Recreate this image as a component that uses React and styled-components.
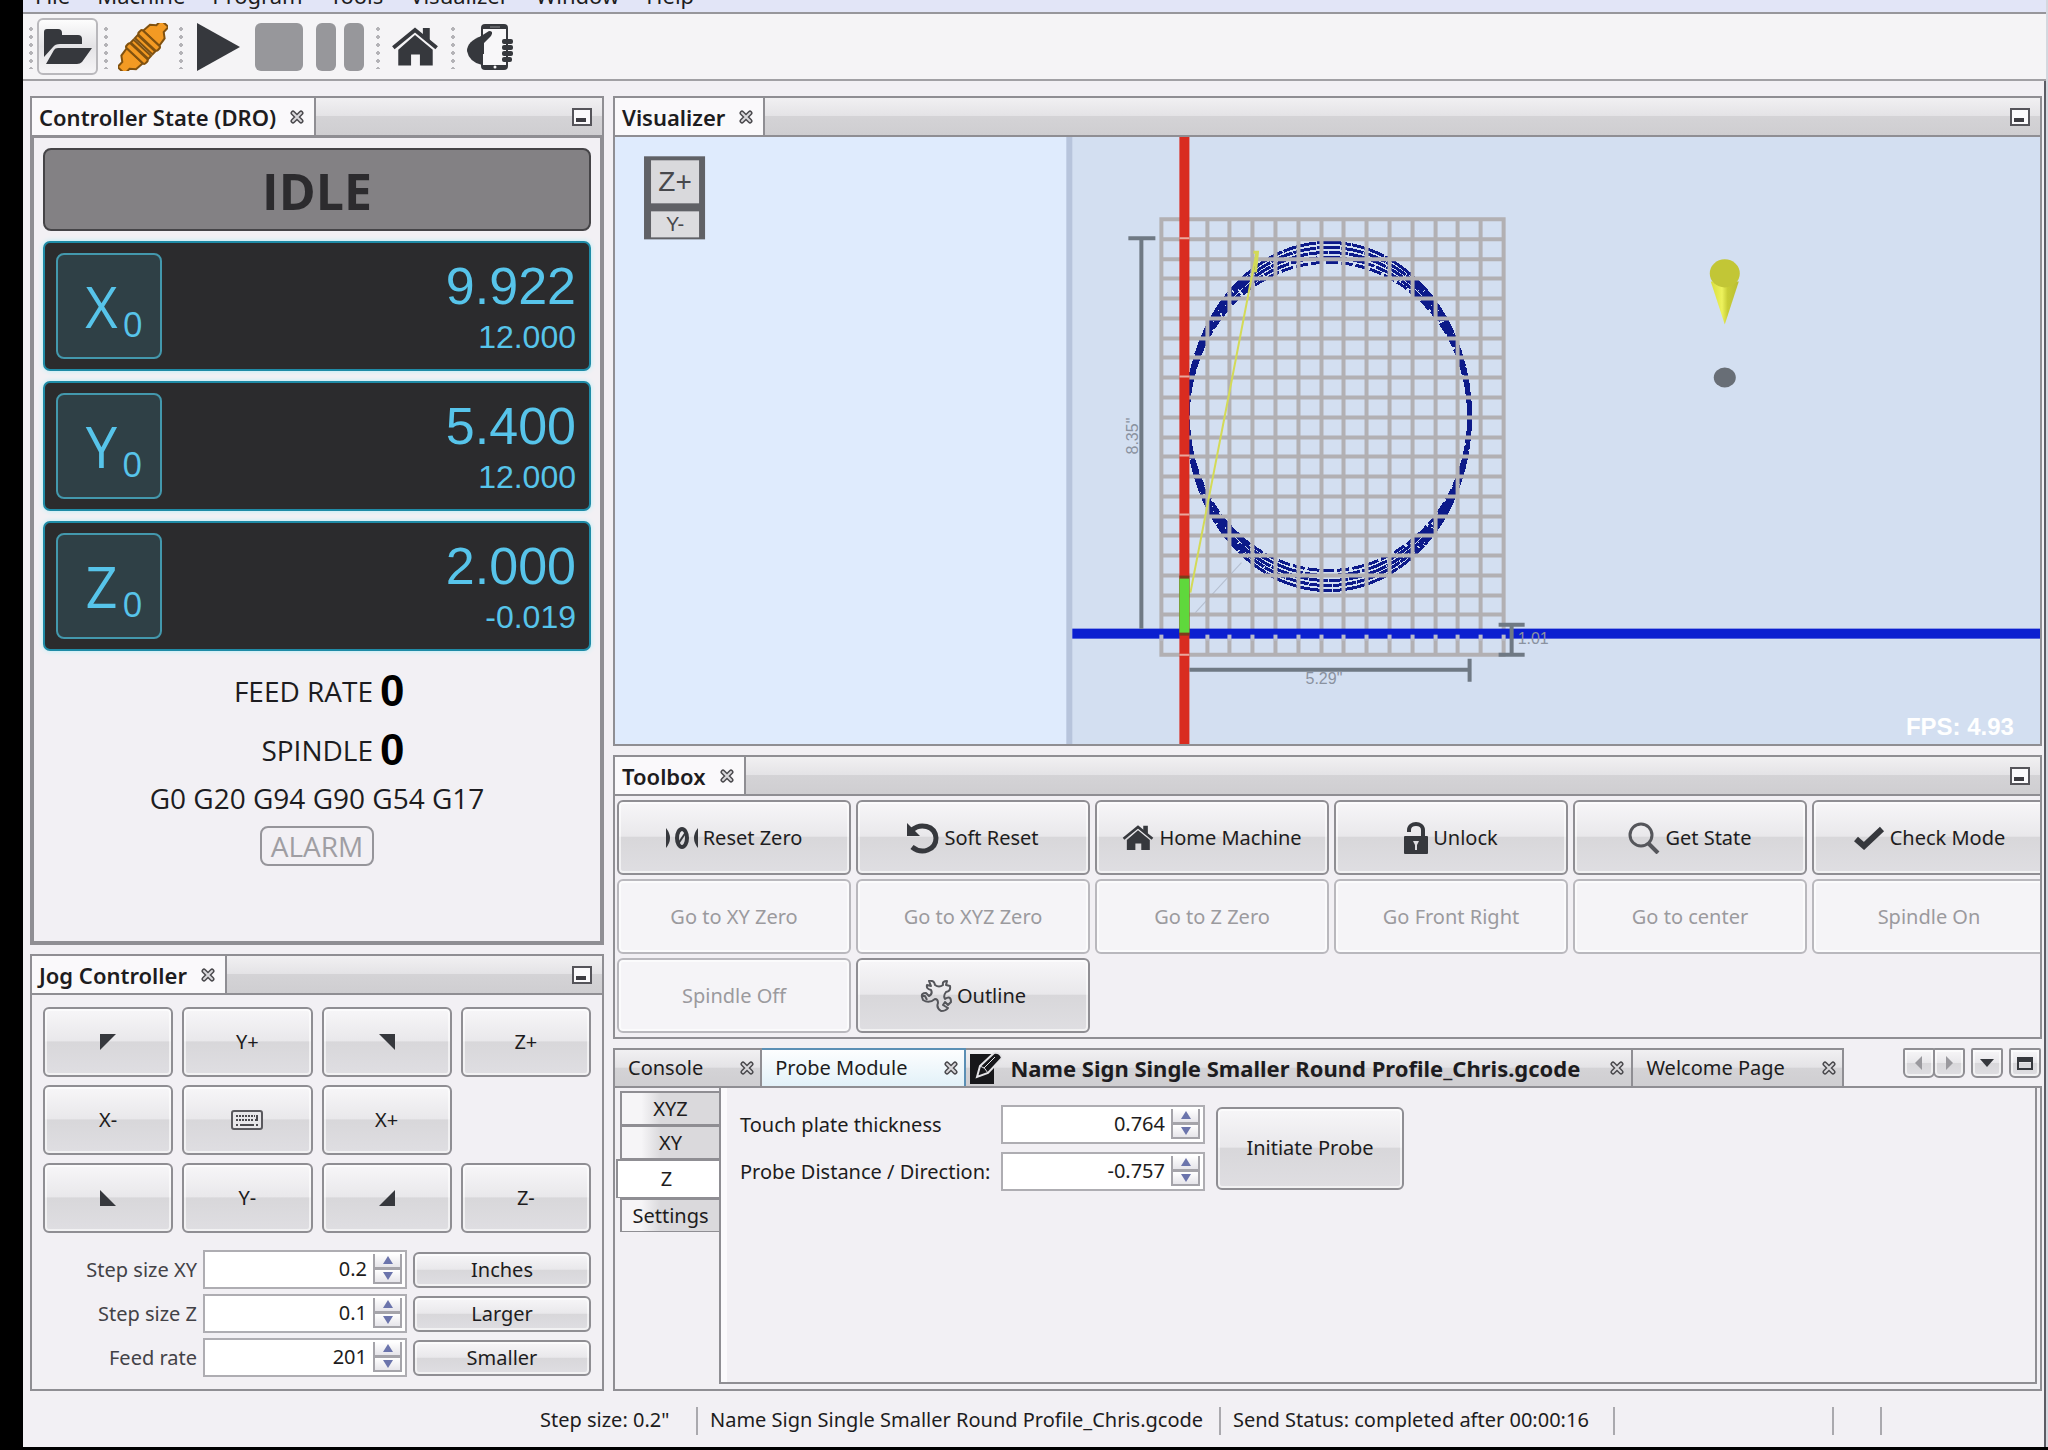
import React, { useState } from 'react'
import styled, { createGlobalStyle, css } from 'styled-components'

const COLORS = {
  WINDOW: '#f2f0f4',
  LINE: '#8f8e93',
  LINE_SOFT: '#b9b8bd',
  TEXT: '#1d1c20',
  TEXT_DISABLED: '#9b9a9e',
  ICON: '#36383d',
  DRO_BG: '#2b2b2d',
  DRO_TEXT: '#57c4ea',
  DRO_LINE: '#1f8ba6',
  NAVY: '#0c1a8a'
}

const FONT_UI = "'Noto Sans', 'DejaVu Sans', sans-serif"
const FONT_DRO = "'Open Sans', 'Noto Sans', sans-serif"
const FONT_DIGITS = "'Liberation Sans', sans-serif"

const GlobalStyle = createGlobalStyle`
  * {
    box-sizing: border-box;
  }
  body {
    margin: 0;
    background: #000;
    color: ${COLORS.TEXT};
    font: 20px/26px ${FONT_UI};
  }
  button, input {
    font: inherit;
    color: inherit;
    margin: 0;
  }
  svg {
    display: block;
    flex: none;
  }
`

const raised = css`
  background: linear-gradient(#f7f6f8 0%, #e9e8eb 48%, #d8d7da 50%, #dfdee2 100%);
  border: 2px solid ${COLORS.LINE};
  border-radius: 6px;
  box-shadow: inset 0 0 0 2px rgba(255, 255, 255, 0.6);
`

const bar = css`
  background: linear-gradient(#f1f0f2 0%, #e4e3e6 48%, #d4d3d6 50%, #cfced1 100%);
`

/* ---------- window ---------- */

const ScWindow = styled.div`
  display: flex;
  flex-direction: column;
  min-height: calc(100vh - 3px);
  margin: 0 0 3px 23px;
  background: ${COLORS.WINDOW};
  border-right: 2px solid #d4d8df;
  box-shadow: inset -2px 0 #5b5c64;
`

const ScMenuBar = styled.nav`
  display: flex;
  align-items: flex-end;
  gap: 27px;
  height: 14px;
  padding: 0 12px 6px;
  overflow: hidden;
  background: #e2e5f7;
  border-bottom: 2px solid #97969b;
  font-size: 22px;
  line-height: 22px;

  a {
    color: inherit;
    text-decoration: none;
  }
`

const ScToolbar = styled.div`
  display: flex;
  align-items: center;
  height: 67px;
  padding-left: 6px;
  background: #f5f4f6;
  border-bottom: 2px solid #a1a0a4;
`

const ScGrip = styled.span`
  width: 4px;
  height: 44px;
  margin: 0 4px 0 6px;
  background: radial-gradient(circle, #b4b3b7 2px, transparent 2px) 0 0 / 4px 8px;

  &:first-child {
    margin-left: 0;
  }
`

const ScToolButton = styled.button`
  display: flex;
  align-items: center;
  justify-content: center;
  width: 61px;
  height: 57px;
  padding: 0;
  background: none;
  border: 2px solid transparent;
  border-radius: 6px;

  ${props =>
    props.$framed &&
    `
    background: linear-gradient(#fdfdfd, #e4e3e6 50%, #f6f5f7);
    border-color: #b9b8bc;
  `}
`

const ScWorkspace = styled.main`
  flex: 1;
  display: grid;
  grid-template-columns: 574px minmax(0, 1fr);
  gap: 9px;
  padding: 15px 4px 0 7px;
`

const ScColumn = styled.div`
  display: flex;
  flex-direction: column;
  gap: 9px;
  min-width: 0;
`

/* ---------- docked panels ---------- */

const ScPanel = styled.section`
  display: flex;
  flex-direction: column;
  flex: ${props => (props.$grow ? '1 1 auto' : 'none')};
  border: 2px solid ${COLORS.LINE};
  overflow: hidden;
`

const ScPanelHeader = styled.header`
  ${bar}
  display: flex;
  align-items: center;
  justify-content: space-between;
  height: 39px;
  padding-right: 10px;
  border-bottom: 2px solid ${COLORS.LINE};
`

const ScPanelTab = styled.h2`
  display: flex;
  align-items: center;
  gap: 14px;
  align-self: stretch;
  margin: 0;
  padding: 0 10px 0 7px;
  background: #faf9fb;
  border-right: 2px solid ${COLORS.LINE};
  font-size: 22px;
  font-weight: 600;
`

const ScIconButton = styled.button`
  display: flex;
  padding: 0;
  border: 0;
  background: none;
`

const CloseIcon = () => (
  <svg width="14" height="14" viewBox="0 0 14 14" fill="none" strokeLinecap="round">
    <path d="M3 3L11 11M11 3L3 11" stroke="#4b4a4e" strokeWidth="5" />
    <path d="M3 3L11 11M11 3L3 11" stroke="#dad9dc" strokeWidth="2" />
  </svg>
)

const MinimizeIcon = () => (
  <svg width="20" height="18" viewBox="0 0 20 18">
    <rect x="1" y="1" width="18" height="16" fill="#fbfafc" stroke="#55545a" strokeWidth="2" />
    <rect x="4" y="10" width="10" height="4" fill="#3d3c42" />
  </svg>
)

const Panel = ({ title, grow, children }) => (
  <ScPanel $grow={grow}>
    <ScPanelHeader>
      <ScPanelTab>
        {title}
        <ScIconButton aria-label={`Close ${title}`}>
          <CloseIcon />
        </ScIconButton>
      </ScPanelTab>
      <ScIconButton aria-label={`Minimize ${title}`}>
        <MinimizeIcon />
      </ScIconButton>
    </ScPanelHeader>
    {children}
  </ScPanel>
)

/* ---------- controller state ---------- */

const ScDro = styled.div`
  flex: 1;
  display: flex;
  flex-direction: column;
  gap: 10px;
  padding: 10px 9px 9px;
  border: solid ${COLORS.LINE};
  border-width: 1px 2px 2px;
  font-family: ${FONT_DRO};
`

const ScState = styled.div`
  display: flex;
  align-items: center;
  justify-content: center;
  height: 83px;
  padding-top: 3px;
  background: #838184;
  border: 2px solid #454447;
  border-radius: 8px;
  color: #2c2b2e;
  font-size: 50px;
  font-weight: bold;
  line-height: 60px;
`

const ScAxis = styled.div`
  display: flex;
  align-items: center;
  justify-content: space-between;
  height: 130px;
  padding: 0 13px 0 11px;
  background: ${COLORS.DRO_BG};
  border: 2px solid ${COLORS.DRO_LINE};
  border-radius: 7px;
  box-shadow: 0 0 5px #b4eff7;
  color: ${COLORS.DRO_TEXT};
`

const ScAxisButton = styled.button`
  width: 106px;
  height: 106px;
  padding: 0 0 0 10px;
  background: #2f4046;
  border: 2px solid #4398ad;
  border-radius: 8px;
  font-size: 56px;
  line-height: 64px;

  sub {
    font-size: 35px;
    line-height: 20px;
    vertical-align: -9px;
    margin-left: 5px;
  }
`

const ScCoordinates = styled.div`
  display: flex;
  flex-direction: column;
  align-items: flex-end;
  gap: 9px;
  font-family: ${FONT_DIGITS};
`

const ScWorkValue = styled.div`
  font-size: 52px;
  line-height: 52px;
`

const ScMachineValue = styled.div`
  font-size: 32px;
  line-height: 32px;
`

const ScReadouts = styled.div`
  display: flex;
  flex-direction: column;
  align-items: center;
  font-size: 28px;
  line-height: 38px;
`

const ScReadout = styled.div`
  display: grid;
  grid-template-columns: 61fr 39fr;
  align-items: center;
  gap: 7px;
  align-self: stretch;
  height: 59px;

  span {
    text-align: right;
  }
  strong {
    color: #000;
    font: bold 44px/50px ${FONT_DIGITS};
  }
`

const ScAlarm = styled.div`
  height: 40px;
  margin-top: 9px;
  padding: 0 9px;
  border: 2px solid #96959a;
  border-radius: 8px;
  color: #9f9ea3;
  line-height: 36px;
`

const AXES = [
  { name: 'X', work: '9.922', machine: '12.000' },
  { name: 'Y', work: '5.400', machine: '12.000' },
  { name: 'Z', work: '2.000', machine: '-0.019' }
]

const ControllerState = () => (
  <Panel title="Controller State (DRO)" grow>
    <ScDro>
      <ScState>IDLE</ScState>
      {AXES.map(axis => (
        <ScAxis key={axis.name}>
          <ScAxisButton>
            {axis.name}
            <sub>0</sub>
          </ScAxisButton>
          <ScCoordinates>
            <ScWorkValue>{axis.work}</ScWorkValue>
            <ScMachineValue>{axis.machine}</ScMachineValue>
          </ScCoordinates>
        </ScAxis>
      ))}
      <ScReadouts>
        <ScReadout>
          <span>FEED RATE</span>
          <strong>0</strong>
        </ScReadout>
        <ScReadout>
          <span>SPINDLE</span>
          <strong>0</strong>
        </ScReadout>
        <div>G0 G20 G94 G90 G54 G17</div>
        <ScAlarm>ALARM</ScAlarm>
      </ScReadouts>
    </ScDro>
  </Panel>
)

/* ---------- spin box ---------- */

const ScSpinBox = styled.div`
  display: flex;
  width: 204px;
  height: 39px;
  padding: 2px 3px 3px 6px;
  background: #fff;
  border: 2px solid #aeadb2;

  input {
    flex: 1;
    min-width: 0;
    padding: 0 6px 0 0;
    border: 0;
    outline: 0;
    background: none;
    text-align: right;
  }
`

const ScSpinner = styled.div`
  display: flex;
  flex-direction: column;
  width: 29px;
  border: solid #a5a4aa;
  border-width: 0 2px 2px;

  button {
    flex: 1;
    display: flex;
    align-items: center;
    justify-content: center;
    padding: 0;
    border: 0;
    background: linear-gradient(#fff, #e6e5ea);
  }
  button + button {
    border-top: 3px solid #a5a4aa;
  }
`

const SpinBox = ({ id, initial }) => {
  const [value, setValue] = useState(initial)
  return (
    <ScSpinBox>
      <input id={id} type="text" value={value} onChange={e => setValue(e.target.value)} />
      <ScSpinner>
        <button aria-label="Increase" tabIndex={-1}>
          <svg width="10" height="8" viewBox="0 0 10 8">
            <path d="M0 8L5 0L10 8Z" fill="#6b74ac" />
          </svg>
        </button>
        <button aria-label="Decrease" tabIndex={-1}>
          <svg width="10" height="8" viewBox="0 0 10 8">
            <path d="M0 0L5 8L10 0Z" fill="#6b74ac" />
          </svg>
        </button>
      </ScSpinner>
    </ScSpinBox>
  )
}

/* ---------- jog controller ---------- */

const ScJog = styled.div`
  display: flex;
  flex-direction: column;
  gap: 17px;
  padding: 12px 11px 12px;
`

const ScJogPad = styled.div`
  display: grid;
  grid-template-columns: repeat(4, 1fr);
  grid-auto-rows: 70px;
  gap: 8px 9px;
`

const ScButton = styled.button`
  ${raised}
  display: flex;
  align-items: center;
  justify-content: center;
  gap: 5px;
  padding: 0;
  white-space: nowrap;

  &:disabled {
    background: #f5f4f7;
    border-color: ${COLORS.LINE_SOFT};
    color: ${COLORS.TEXT_DISABLED};
  }
`

const ScJogFields = styled.div`
  display: grid;
  grid-template-columns: 1fr 204px 178px;
  align-items: center;
  gap: 5px 6px;

  label {
    color: #434247;
    text-align: right;
  }
  ${ScButton} {
    height: 36px;
  }
`

const Corner = ({ points }) => (
  <svg width="16" height="16" viewBox="0 0 16 16">
    <polygon points={points} fill={COLORS.ICON} />
  </svg>
)

const KeyboardIcon = () => (
  <svg width="32" height="20" viewBox="0 0 32 20">
    <rect x="1" y="1" width="30" height="18" rx="2" fill="#e8e7ea" stroke="#5a595e" strokeWidth="2" />
    <path d="M5 6H24M5 10H22" stroke="#4b4a4f" strokeWidth="2" strokeDasharray="2 1" />
    <path d="M5 15H7M9 15H23M25 15H27M26 5V10H24" stroke="#4b4a4f" strokeWidth="2" fill="none" />
  </svg>
)

const JogController = () => (
  <Panel title="Jog Controller">
    <ScJog>
      <ScJogPad>
        <ScButton aria-label="X- Y+">
          <Corner points="0,0 16,0 0,16" />
        </ScButton>
        <ScButton>Y+</ScButton>
        <ScButton aria-label="X+ Y+">
          <Corner points="0,0 16,0 16,16" />
        </ScButton>
        <ScButton>Z+</ScButton>
        <ScButton>X-</ScButton>
        <ScButton aria-label="Keyboard">
          <KeyboardIcon />
        </ScButton>
        <ScButton>X+</ScButton>
        <span />
        <ScButton aria-label="X- Y-">
          <Corner points="0,0 16,16 0,16" />
        </ScButton>
        <ScButton>Y-</ScButton>
        <ScButton aria-label="X+ Y-">
          <Corner points="16,0 16,16 0,16" />
        </ScButton>
        <ScButton>Z-</ScButton>
      </ScJogPad>
      <ScJogFields>
        <label htmlFor="step-xy">Step size XY</label>
        <SpinBox id="step-xy" initial="0.2" />
        <ScButton>Inches</ScButton>
        <label htmlFor="step-z">Step size Z</label>
        <SpinBox id="step-z" initial="0.1" />
        <ScButton>Larger</ScButton>
        <label htmlFor="feed-rate">Feed rate</label>
        <SpinBox id="feed-rate" initial="201" />
        <ScButton>Smaller</ScButton>
      </ScJogFields>
    </ScJog>
  </Panel>
)

/* ---------- visualizer ---------- */

const ScScene = styled.svg`
  flex: 1 1 560px;
  width: 100%;
  min-height: 0;
  background: #d3dff1;
`

const GRID = { x: 546, y: 83, w: 342, h: 435, cols: 15, rows: 22 }

const gridPath = () => {
  const parts = []
  for (let i = 0; i <= GRID.cols; i++) {
    const x = Math.round(GRID.x + (GRID.w / GRID.cols) * i)
    if (i !== 1) parts.push(`M${x} ${GRID.y}V${GRID.y + GRID.h}`)
  }
  for (let i = 0; i <= GRID.rows; i++) {
    const y = Math.round(GRID.y + (GRID.h / GRID.rows) * i)
    if (i !== 21) parts.push(`M${GRID.x - 2} ${y}H${GRID.x + GRID.w + 2}`)
  }
  return parts.join('')
}

const TICKS = Array.from({ length: GRID.cols + 1 }, (_, i) =>
  Math.round(GRID.x + (GRID.w / GRID.cols) * i)
).filter((_, i) => i !== 1)

const PASSES = [
  { rx: 142, ry: 174, dash: '34 1' },
  { rx: 141, ry: 169, dash: '23 1' },
  { rx: 141, ry: 164, dash: '19 1' },
  { rx: 140, ry: 159, dash: '27 2' },
  { rx: 140, ry: 154, dash: '12 3' }
]

const Visualizer = () => (
  <Panel title="Visualizer" grow>
    <ScScene viewBox="0 0 1424 608" preserveAspectRatio="xMidYMid slice" role="img">
      <defs>
        <linearGradient id="cone">
          <stop offset="0" stopColor="#d8de3c" />
          <stop offset="0.4" stopColor="#edf25c" />
          <stop offset="0.6" stopColor="#c8cd36" />
          <stop offset="1" stopColor="#b9bd33" />
        </linearGradient>
      </defs>
      <rect width="452" height="608" fill="#dfebfd" />
      <rect x="451" width="6" height="608" fill="#b7c4dc" />

      <g>
        <rect x="29" y="20" width="61" height="83" fill="#606166" />
        <rect x="36" y="24" width="48" height="43" fill="#d9d9dc" />
        <rect x="36" y="75" width="48" height="26" fill="#dcdcdf" />
        <text x="60" y="55" textAnchor="middle" fontSize="28" fontFamily="Liberation Sans, sans-serif" fill="#47484c">
          Z+
        </text>
        <text x="60" y="95" textAnchor="middle" fontSize="20" fontFamily="Liberation Sans, sans-serif" fill="#47484c">
          Y-
        </text>
      </g>

      <g fill="none" stroke={COLORS.NAVY} strokeWidth="3" shapeRendering="crispEdges">
        {PASSES.map(pass => (
          <ellipse key={pass.ry} cx="713" cy="280" rx={pass.rx} ry={pass.ry} strokeDasharray={pass.dash} />
        ))}
      </g>
      <path d="M626 426L580 476" stroke="#b4becf" strokeWidth="1" />
      <path d={gridPath()} stroke="#b2b0b3" strokeWidth="4" fill="none" />
      <path d="M641 116L618 235L575 456" stroke="#d3da57" strokeWidth="2" fill="none" />
      <path d="M638 116L642 116L640 136" stroke="#d3da57" strokeWidth="3" fill="none" />

      <rect x="457" y="492" width="967" height="10" fill="#0b1fd0" />
      <g fill="#b9bccb">
        {TICKS.map(x => (
          <rect key={x} x={x - 2} y="498" width="4" height="6" />
        ))}
      </g>
      <rect x="564" width="10" height="608" fill="#d92c20" />
      <path d="M564 102H574M564 240H574M564 319H574M564 378H574M564 518H574" stroke="#eaa79c" strokeWidth="2" />
      <rect x="564" y="439" width="10" height="60" fill="#7d3c1a" />
      <rect x="564" y="442" width="10" height="54" fill="#5fd83c" />

      <g stroke="#6f7984" strokeWidth="4" fill="none">
        <path d="M513 102H540M526 102V492" />
        <path d="M574 533H854M854 522V545" />
        <path d="M883 488H909M883 518H909M896 488V518" />
      </g>
      <g fontSize="16" fontFamily="Liberation Sans, sans-serif" fill="#8a92a0">
        <text transform="translate(523 318) rotate(-90)">8.35"</text>
        <text x="690" y="547">5.29"</text>
        <text x="902" y="507">1.01</text>
      </g>

      <path d="M1095 145L1109 188L1123 145Z" fill="url(#cone)" />
      <ellipse cx="1109" cy="137" rx="15" ry="14" fill="#c2c636" />
      <ellipse cx="1109" cy="241" rx="11" ry="10" fill="#686e76" />
      <text x="1398" y="598" textAnchor="end" fontSize="24" fontWeight="bold" fontFamily="Liberation Sans, sans-serif" fill="#fff">
        FPS: 4.93
      </text>
    </ScScene>
  </Panel>
)

/* ---------- toolbox ---------- */

const ScToolbox = styled.div`
  display: grid;
  grid-template-columns: repeat(6, minmax(234px, 1fr));
  grid-auto-rows: 75px;
  gap: 4px 5px;
  padding: 4px 0 4px 2px;
  overflow: hidden;
`

const HomeIcon = ({ size }) => (
  <svg width={size} height={size * 0.8} viewBox="0 0 48 39">
    <path d="M32 1H39V14L32 8Z" fill={COLORS.ICON} />
    <path d="M2 21L24 3L46 21" fill="none" stroke={COLORS.ICON} strokeWidth="4" />
    <path d="M24 8L42 23V39H29V28H20V39H7V23Z" fill={COLORS.ICON} />
  </svg>
)

const ResetZeroIcon = () => (
  <svg width="32" height="24" viewBox="0 0 32 24" fill={COLORS.ICON}>
    <path d="M0 2Q8 12 0 22ZM32 2Q24 12 32 22Z" />
    <ellipse cx="16" cy="12" rx="5" ry="9" fill="none" stroke={COLORS.ICON} strokeWidth="4" />
    <path d="M12 18L20 6" stroke={COLORS.ICON} strokeWidth="2" />
  </svg>
)

const SoftResetIcon = () => (
  <svg width="32" height="32" viewBox="0 0 32 32">
    <path d="M5 8C13 1 28 3 29 16C29 28 15 33 5 25" fill="none" stroke={COLORS.ICON} strokeWidth="5" />
    <path d="M0 1V14H13Z" fill={COLORS.ICON} />
  </svg>
)

const UnlockIcon = () => (
  <svg width="24" height="32" viewBox="0 0 24 32">
    <path d="M5 10V8C5 0 19 0 19 8V16" fill="none" stroke={COLORS.ICON} strokeWidth="4" />
    <rect y="14" width="24" height="18" rx="1" fill={COLORS.ICON} />
    <path d="M9 19H15L13 23V28H11V23Z" fill="#dddce0" />
  </svg>
)

const SearchIcon = () => (
  <svg width="32" height="32" viewBox="0 0 32 32" fill="none" stroke="#55565b">
    <circle cx="13" cy="13" r="11" strokeWidth="3" />
    <path d="M20 21L30 31" strokeWidth="4" />
  </svg>
)

const CheckIcon = () => (
  <svg width="32" height="24" viewBox="0 0 32 24">
    <path d="M3 13L11 20L29 3" fill="none" stroke={COLORS.ICON} strokeWidth="6" />
  </svg>
)

/* three-armed spanner */
const OutlineIcon = () => (
  <svg width="32" height="32" viewBox="0 0 32 32" fill="none" stroke="#55565b" strokeWidth="2" strokeLinejoin="round">
    <path d="M9 1Q14 0 15 5Q19 8 23 5Q22 1 27 1L26 5L30 6Q31 11 26 12Q23 16 25 19Q31 15 31 22L28 25L25 22L23 25L28 28Q26 31 21 31Q16 28 18 23Q18 19 15 19Q9 24 3 20L2 17Q1 13 6 13L9 16Q13 14 11 10Q6 9 7 5L11 6Z" />
    <path d="M1 16H5L7 20" />
  </svg>
)

const TOOLS = [
  { label: 'Reset Zero', icon: <ResetZeroIcon /> },
  { label: 'Soft Reset', icon: <SoftResetIcon /> },
  { label: 'Home Machine', icon: <HomeIcon size={32} /> },
  { label: 'Unlock', icon: <UnlockIcon /> },
  { label: 'Get State', icon: <SearchIcon /> },
  { label: 'Check Mode', icon: <CheckIcon /> },
  { label: 'Go to XY Zero', disabled: true },
  { label: 'Go to XYZ Zero', disabled: true },
  { label: 'Go to Z Zero', disabled: true },
  { label: 'Go Front Right', disabled: true },
  { label: 'Go to center', disabled: true },
  { label: 'Spindle On', disabled: true },
  { label: 'Spindle Off', disabled: true },
  { label: 'Outline', icon: <OutlineIcon /> }
]

const Toolbox = () => (
  <Panel title="Toolbox">
    <ScToolbox>
      {TOOLS.map(tool => (
        <ScButton key={tool.label} disabled={tool.disabled}>
          {tool.icon}
          {tool.label}
        </ScButton>
      ))}
    </ScToolbox>
  </Panel>
)

/* ---------- documents ---------- */

const ScDocuments = styled.section`
  display: flex;
  flex-direction: column;
  height: 343px;
`

const ScDocumentBar = styled.div`
  display: flex;
  align-items: flex-start;
  justify-content: space-between;
`

const ScDocumentTabs = styled.div`
  display: flex;
  border-left: 2px solid ${COLORS.LINE};
`

const ScDocumentTab = styled.div`
  ${bar}
  display: flex;
  align-items: center;
  gap: 8px;
  height: 38px;
  padding: ${props => (props.$bold ? '0 7px 0 4px' : '0 6px 0 13px')};
  border: solid ${COLORS.LINE};
  border-width: 2px 2px 0 0;
  font-size: ${props => (props.$bold ? 22 : 20)}px;
  font-weight: ${props => (props.$bold ? 'bold' : 'normal')};

  button:first-of-type {
    padding: 0;
    border: 0;
    background: none;
  }
  ${ScIconButton} {
    margin-left: ${props => (props.$bold ? 22 : 29)}px;
  }

  ${props =>
    props.$active &&
    `
    background: linear-gradient(#fdfeff, #e2f1f8);
    border-color: #5b8fb5;
  `}
`

const ScTabControls = styled.div`
  display: flex;
  gap: 6px;
  padding-right: 1px;
`

const ScControl = styled.button`
  ${raised}
  display: flex;
  align-items: center;
  justify-content: center;
  width: 32px;
  height: 30px;
  padding: 0;
  border-radius: 2px 2px 6px 6px;
`

const ScControlPair = styled.div`
  display: flex;

  ${ScControl} + ${ScControl} {
    margin-left: -2px;
  }
`

const ScDocument = styled.div`
  flex: 1;
  display: flex;
  padding: 0 3px 5px 1px;
  border: 2px solid ${COLORS.LINE};
`

const ScSideTabs = styled.div`
  display: flex;
  flex-direction: column;
  align-items: flex-end;
  width: 103px;
  padding-top: 3px;
`

const ScSideTab = styled.button`
  width: 99px;
  height: 34px;
  padding: 0;
  background: linear-gradient(90deg, #f6f5f7 20%, #dad9dc 40%);
  border: solid ${COLORS.LINE};
  border-width: 2px 0 1px 2px;

  ${props =>
    props.$active &&
    `
    width: 103px;
    height: 39px;
    padding-right: 4px;
    background: #fff;
  `}
`

const ScPane = styled.div`
  flex: 1;
  border: solid ${COLORS.LINE};
  border-width: 0 2px 2px;
  box-shadow: inset 6px 0 #fbfafc;
`

const ScProbeForm = styled.div`
  display: grid;
  grid-template-columns: 250px 204px 188px;
  align-items: center;
  gap: 8px 11px;
  padding: 17px 19px;

  label {
    white-space: nowrap;
  }
  ${ScButton} {
    grid-column: 3;
    grid-row: 1 / 3;
    height: 83px;
  }
`

const EditIcon = () => (
  <svg width="32" height="32" viewBox="0 0 32 32">
    <path d="M0 2H24V32H0Z" fill="#17171a" />
    <path d="M7 25L10 14L24 1Q30 0 32 6L18 21Z" fill="#17171a" stroke="#e4e3e6" strokeWidth="2" />
    <path d="M10 14Q15 15 18 21M14 16L25 5" stroke="#e4e3e6" strokeWidth="1" fill="none" />
  </svg>
)

const Triangle = ({ d, color }) => (
  <svg width="16" height="14" viewBox="0 0 16 14">
    <path d={d} fill={color} />
  </svg>
)

const DOCUMENTS = [
  { title: 'Console' },
  { title: 'Probe Module', active: true },
  { title: 'Name Sign Single Smaller Round Profile_Chris.gcode', bold: true, icon: <EditIcon /> },
  { title: 'Welcome Page' }
]

const PROBE_TABS = ['XYZ', 'XY', 'Z', 'Settings']

const Documents = () => {
  const [tab, setTab] = useState('Z')
  return (
    <ScDocuments>
      <ScDocumentBar>
        <ScDocumentTabs>
          {DOCUMENTS.map(doc => (
            <ScDocumentTab key={doc.title} $active={doc.active} $bold={doc.bold}>
              {doc.icon}
              <button>{doc.title}</button>
              <ScIconButton aria-label={`Close ${doc.title}`}>
                <CloseIcon />
              </ScIconButton>
            </ScDocumentTab>
          ))}
        </ScDocumentTabs>
        <ScTabControls>
          <ScControlPair>
            <ScControl aria-label="Previous tab">
              <Triangle d="M11 0V14L4 7Z" color="#9a999e" />
            </ScControl>
            <ScControl aria-label="Next tab">
              <Triangle d="M5 0V14L12 7Z" color="#9a999e" />
            </ScControl>
          </ScControlPair>
          <ScControl aria-label="Tab list">
            <Triangle d="M1 3H15L8 11Z" color={COLORS.ICON} />
          </ScControl>
          <ScControl aria-label="Maximize">
            <svg width="16" height="13" viewBox="0 0 16 13">
              <path d="M1 2H15V12H1Z" fill="none" stroke={COLORS.ICON} strokeWidth="2" />
              <path d="M0 0H16V5H0Z" fill={COLORS.ICON} />
            </svg>
          </ScControl>
        </ScTabControls>
      </ScDocumentBar>
      <ScDocument>
        <ScSideTabs>
          {PROBE_TABS.map(name => (
            <ScSideTab key={name} $active={name === tab} onClick={() => setTab(name)}>
              {name}
            </ScSideTab>
          ))}
        </ScSideTabs>
        <ScPane>
          <ScProbeForm>
            <label htmlFor="plate">Touch plate thickness</label>
            <SpinBox id="plate" initial="0.764" />
            <label htmlFor="distance">Probe Distance / Direction:</label>
            <SpinBox id="distance" initial="-0.757" />
            <ScButton>Initiate Probe</ScButton>
          </ScProbeForm>
        </ScPane>
      </ScDocument>
    </ScDocuments>
  )
}

/* ---------- status bar ---------- */

const ScStatusBar = styled.footer`
  display: flex;
  align-items: center;
  justify-content: flex-end;
  height: 56px;
  padding-top: 4px;
`

const ScStatus = styled.div`
  width: ${props => props.$width}px;
  height: 28px;
  padding-left: 12px;
  border-right: 2px solid #aaa9ae;
  white-space: nowrap;

  &:last-child {
    border-right: 0;
  }
`

/* ---------- toolbar icons ---------- */

const FolderIcon = () => (
  <svg width="48" height="36" viewBox="0 0 48 36" fill={COLORS.ICON}>
    <path d="M0 28V3Q0 0 3 0H14Q18 0 18 4V6H34Q38 6 38 10V15H16Q11 15 9 18Z" />
    <path d="M14 19H48L38 33Q36 35 33 35H2L10 21Q11 19 14 19Z" />
  </svg>
)

const ConnectIcon = () => (
  <svg width="50" height="48" viewBox="0 0 50 48">
    <g transform="translate(25 24) rotate(-47)" fill="#f39a23" stroke="#80510f" strokeWidth="2">
      <path d="M-12 -11V11L-21 10L-25 5H-32V-5H-25L-21 -10Z" />
      <path d="M12 -11V11L21 10L25 5H32V-5H25L21 -10Z" />
      <rect x="-12" y="-13" width="6" height="26" rx="2" />
      <rect x="-5" y="-12" width="4" height="24" />
      <rect x="1" y="-12" width="4" height="24" />
      <rect x="6" y="-13" width="6" height="26" rx="2" />
    </g>
  </svg>
)

/* hand holding a phone */
const PendantIcon = () => (
  <svg width="48" height="48" viewBox="0 0 48 48" fill={COLORS.ICON}>
    <path d="M16 13Q1 18 1 28Q3 39 16 42Z" />
    <rect x="15" y="1" width="27" height="46" rx="4" />
    <rect x="17" y="6" width="23" height="36" fill="#f8f7f9" />
    <path d="M12 15L23 8Q28 8 25 13L18 20V31H12Z" />
    <rect x="36" y="16" width="11" height="5" rx="2" />
    <rect x="36" y="22" width="11" height="5" rx="2" />
    <rect x="36" y="28" width="11" height="5" rx="2" />
    <rect x="36" y="34" width="10" height="5" rx="2" />
    <path d="M24 4H34" stroke="#8d8e92" strokeWidth="1" />
    <circle cx="29" cy="44" r="1.5" fill="#f8f7f9" />
  </svg>
)

const StartIcon = () => (
  <svg width="48" height="48" viewBox="0 0 48 48">
    <path d="M3 0L46 24L3 48Z" fill={COLORS.ICON} />
  </svg>
)

const StopIcon = () => (
  <svg width="48" height="48" viewBox="0 0 48 48">
    <rect width="48" height="48" rx="6" fill="#97979b" />
  </svg>
)

const PauseIcon = () => (
  <svg width="48" height="48" viewBox="0 0 48 48" fill="#97979b">
    <rect width="20" height="48" rx="6" />
    <rect x="28" width="20" height="48" rx="6" />
  </svg>
)

const MENU = ['File', 'Machine', 'Program', 'Tools', 'Visualizer', 'Window', 'Help']

const App = () => (
  <>
    <GlobalStyle />
    <ScWindow>
      <ScMenuBar>
        {MENU.map(item => (
          <a key={item} href="#menu">
            {item}
          </a>
        ))}
      </ScMenuBar>
      <ScToolbar>
        <ScGrip />
        <ScToolButton $framed aria-label="Open">
          <FolderIcon />
        </ScToolButton>
        <ScGrip />
        <ScToolButton aria-label="Connect">
          <ConnectIcon />
        </ScToolButton>
        <ScGrip />
        <ScToolButton aria-label="Start">
          <StartIcon />
        </ScToolButton>
        <ScToolButton aria-label="Stop">
          <StopIcon />
        </ScToolButton>
        <ScToolButton aria-label="Pause">
          <PauseIcon />
        </ScToolButton>
        <ScGrip />
        <ScToolButton aria-label="Home">
          <HomeIcon size={48} />
        </ScToolButton>
        <ScGrip />
        <ScToolButton aria-label="Pendant">
          <PendantIcon />
        </ScToolButton>
      </ScToolbar>
      <ScWorkspace>
        <ScColumn>
          <ControllerState />
          <JogController />
        </ScColumn>
        <ScColumn>
          <Visualizer />
          <Toolbox />
          <Documents />
        </ScColumn>
      </ScWorkspace>
      <ScStatusBar>
        <ScStatus $width={170}>Step size: 0.2"</ScStatus>
        <ScStatus $width={523}>Name Sign Single Smaller Round Profile_Chris.gcode</ScStatus>
        <ScStatus $width={394}>Send Status: completed after 00:00:16</ScStatus>
        <ScStatus $width={219} />
        <ScStatus $width={48} />
        <ScStatus $width={164} />
      </ScStatusBar>
    </ScWindow>
  </>
)

export default App
